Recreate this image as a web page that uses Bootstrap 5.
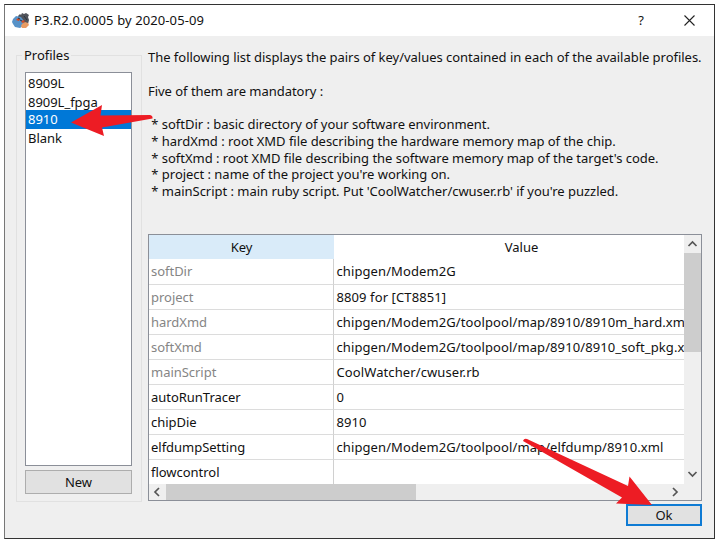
<!DOCTYPE html>
<html lang="en">
<head>
<meta charset="utf-8">
<meta name="viewport" content="width=device-width, initial-scale=1">
<title>P3.R2.0.0005 by 2020-05-09</title>
<link href="https://cdn.jsdelivr.net/npm/bootstrap@5.3.0/dist/css/bootstrap.min.css" rel="stylesheet">
<style>
body{width:715px;height:541px;background:#fff;font-family:"Noto Sans","Open Sans",sans-serif;font-size:13px;letter-spacing:-.03px;line-height:18px;color:#111;padding:4px 0 2px 4px}
.dialog{width:711px;height:535px;background:#efefef;border:1px solid #333;border-left-color:#777}
.titlebar{height:31px;padding-left:7px}
.titlebar .caption{margin:-2px 0 0 4px;letter-spacing:.1px}
.help{width:14px;margin:-2px 36px 0 0}
.closer{margin-right:19px}
.main-area{padding:13px 11px 0 11px}
.profiles{width:126px;height:452px;padding-top:6px}
.profiles .frame{height:447px;border:1px solid #e1e1e1;padding:16px 9px 0 8px}
.profiles .legend-text{top:-10px;left:5px;background:#efefef;padding:0 2px;height:18px}
.profile-list{height:394px;border:1px solid #8b8f98;padding-top:1px;background:#fff}
.profile-list .list-group-item{height:18.5px;line-height:19px;padding:0 0 0 2px;background:none;color:#111}
.profile-list .list-group-item.active{background:#0078d7;color:#fff}
.btn-win{height:24px;border:1px solid #adadad;background:#e1e1e1;border-radius:0;font-size:13px;line-height:20px;padding:0;color:#111}
.btn-ok{width:76px;height:22px;border:2px solid #0f7bd4;line-height:18px;margin-top:3px}
.right-col{width:554px;margin-left:6px}
.intro{height:185px;line-height:16.75px;white-space:pre;margin:0}
.grid-box{height:267px;border:1px solid #8b8f98;background:#efefef}
.grid-body{width:535px;height:249px;background:#fff}
.grid-head,.grid-row{display:grid;grid-template-columns:185px 350px}
.grid-head{height:24px;line-height:24px;text-align:center}
.grid-head .sorted{background:#d9ebf9}
.grid-head .val{padding-left:25px}
.grid-row{height:25.07px;line-height:25px;white-space:nowrap}
.grid-head + .grid-row{height:26px}
.grid-row span{border-bottom:1px solid #dcdcdc;padding-left:3px;overflow:hidden}
.grid-row span:first-child{border-right:1px solid #d0d0d0;padding-left:2px}
.grid-row span:last-child{padding-left:2.5px;letter-spacing:.1px}
.locked span:first-child{color:#858585}
.vbar{width:17px;height:249px}
.vbar svg,.hbar svg{display:block}
.vthumb{width:17px;height:99px;background:#cdcdcd}
.hbar{height:16px}
.hthumb{width:250px;height:16px;background:#cdcdcd}
.marks{left:0;top:0;z-index:10;pointer-events:none}
</style>
</head>
<body class="overflow-hidden position-relative">
<div class="dialog">
  <div class="titlebar bg-white d-flex align-items-center">
    <svg width="18" height="17" viewBox="0 0 18 17">
      <path d="M6 4l2-2 1 1 1-2 2 1 2-1 3 2-1 2 1 3-1 4-4 1-5-5z" fill="#50535a"/>
      <path d="M1 7l3-3 5 1 3 4-1 5-3 2-5-1-2-3-1-2z" fill="#5792c8"/>
      <path d="M10 12l3-2 3 1 1 2-3 3-4 0-1-2z" fill="#e89a62"/>
      <path d="M4 8l2-2 2 1-1 2zM9 10l2-2 2 1-2 2z" fill="#d7481f"/>
      <path d="M6 6l2 1M8 8l2 1M12 4l3 4" stroke="#29343e" fill="none"/>
    </svg>
    <span class="caption">P3.R2.0.0005 by 2020-05-09</span>
    <span class="help ms-auto text-center">?</span>
    <svg class="closer" width="11" height="11" viewBox="0 0 11 11"><path d="M.5.5l10 10M10.5.5l-10 10" stroke="#222" stroke-width="1.1"/></svg>
  </div>
  <div class="main-area d-flex">
    <div class="profiles flex-shrink-0">
      <div class="frame position-relative">
        <div class="legend-text position-absolute">Profiles</div>
        <div class="list-group list-group-flush profile-list rounded-0">
          <div class="list-group-item border-0">8909L</div>
          <div class="list-group-item border-0">8909L_fpga</div>
          <div class="list-group-item border-0 active">8910</div>
          <div class="list-group-item border-0">Blank</div>
        </div>
        <button class="btn btn-win w-100 mt-1">New</button>
      </div>
    </div>
    <div class="right-col flex-shrink-0">
      <p class="intro">The following list displays the pairs of key/values contained in each of the available profiles.

Five of them are mandatory :

 * softDir : basic directory of your software environment.
 * hardXmd : root XMD file describing the hardware memory map of the chip.
 * softXmd : root XMD file describing the software memory map of the target's code.
 * project : name of the project you're working on.
 * mainScript : main ruby script. Put 'CoolWatcher/cwuser.rb' if you're puzzled.</p>
      <div class="grid-box">
        <div class="d-flex">
          <div class="grid-body overflow-hidden">
            <div class="grid-head"><span class="sorted">Key</span><span class="val">Value</span></div>
            <div class="grid-row locked"><span>softDir</span><span>chipgen/Modem2G</span></div>
            <div class="grid-row locked"><span>project</span><span>8809 for [CT8851]</span></div>
            <div class="grid-row locked"><span>hardXmd</span><span>chipgen/Modem2G/toolpool/map/8910/8910m_hard.xml</span></div>
            <div class="grid-row locked"><span>softXmd</span><span>chipgen/Modem2G/toolpool/map/8910/8910_soft_pkg.xml</span></div>
            <div class="grid-row locked"><span>mainScript</span><span>CoolWatcher/cwuser.rb</span></div>
            <div class="grid-row"><span>autoRunTracer</span><span>0</span></div>
            <div class="grid-row"><span>chipDie</span><span>8910</span></div>
            <div class="grid-row"><span>elfdumpSetting</span><span>chipgen/Modem2G/toolpool/map/elfdump/8910.xml</span></div>
            <div class="grid-row"><span>flowcontrol</span><span></span></div>
          </div>
          <div class="vbar d-flex flex-column">
            <svg width="17" height="18" viewBox="0 0 17 18"><path d="M4.500 11l4-4 4 4" fill="none" stroke="#555" stroke-width="1.7"/></svg>
            <div class="vthumb"></div>
            <svg class="mt-auto" width="17" height="18" viewBox="0 0 17 18"><path d="M4.500 6l4 4 4-4" fill="none" stroke="#555" stroke-width="1.7"/></svg>
          </div>
        </div>
        <div class="hbar d-flex">
          <svg width="17" height="16" viewBox="0 0 17 16"><path d="M10 4l-4 4 4 4" fill="none" stroke="#555" stroke-width="1.7"/></svg>
          <div class="hthumb"></div>
          <svg class="ms-auto me-3" width="17" height="16" viewBox="0 0 17 16"><path d="M5 4l4 4-4 4" fill="none" stroke="#555" stroke-width="1.7"/></svg>
        </div>
      </div>
      <div class="d-flex justify-content-end"><button class="btn btn-win btn-ok">Ok</button></div>
    </div>
  </div>
</div>
<svg class="marks position-absolute" width="715" height="541" viewBox="0 0 715 541" fill="#ed1c24">
  <path d="M71 122.500L102 105l-1.500 10.500L150 115q3 .5 2.500 3.500L102 127.500l2 8.500z"/>
  <path d="M523 441q1-3 4-2L628 486l1.500-9.500L652 505 616 503.500l6-6z"/>
</svg>
<script src="https://cdn.jsdelivr.net/npm/bootstrap@5.3.0/dist/js/bootstrap.bundle.min.js"></script>
</body>
</html>
